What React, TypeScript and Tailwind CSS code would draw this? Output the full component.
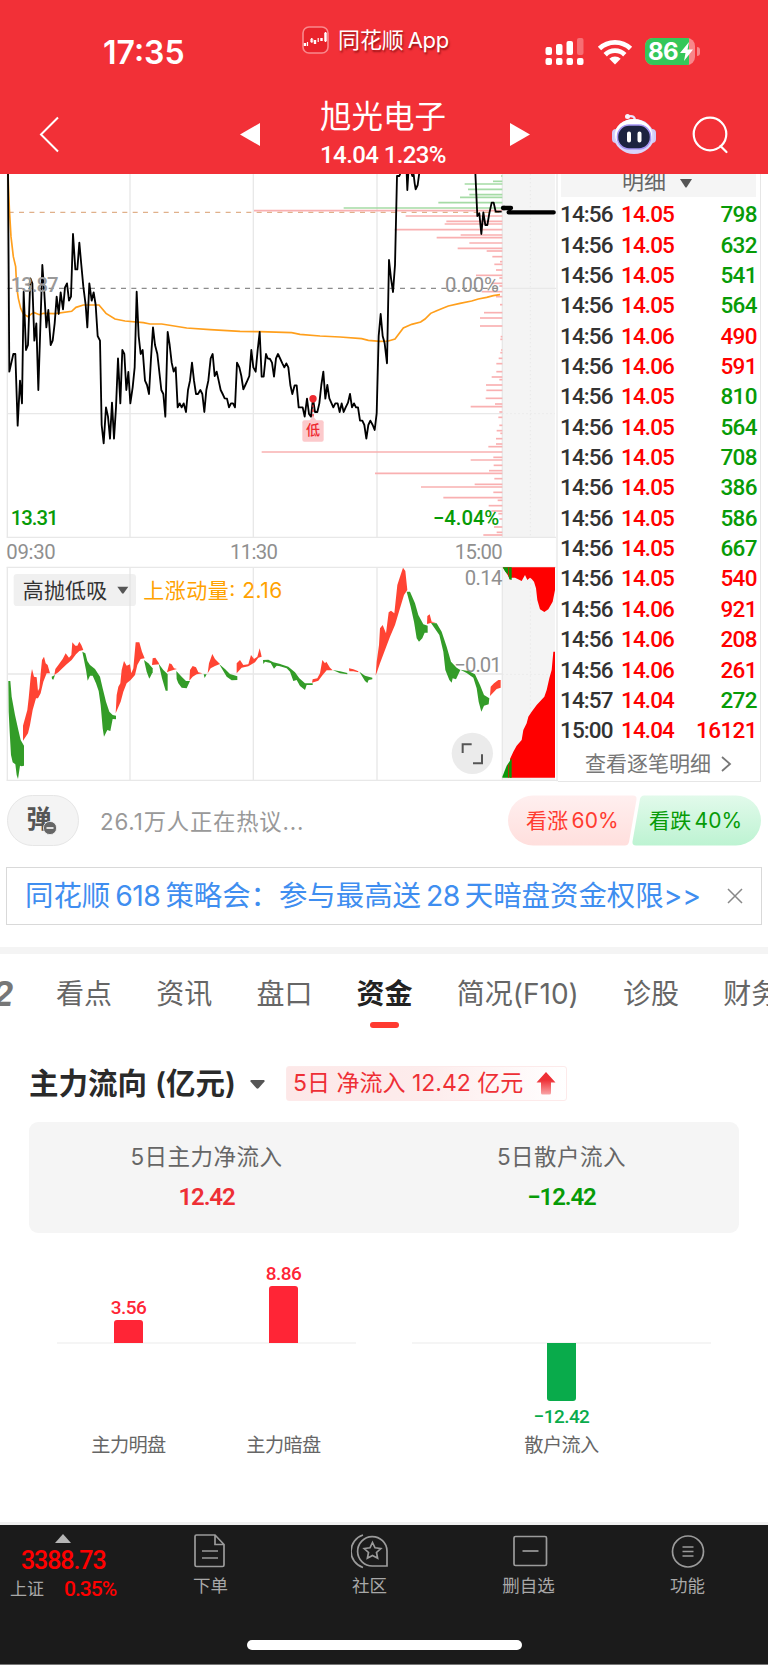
import type { ReactNode } from "react";

type Trade = { time: string; price: string; volume: string; up?: boolean };

const trades: Trade[] = [
  { time: "14:56", price: "14.05", volume: "798" },
  { time: "14:56", price: "14.05", volume: "632" },
  { time: "14:56", price: "14.05", volume: "541" },
  { time: "14:56", price: "14.05", volume: "564" },
  { time: "14:56", price: "14.06", volume: "490", up: true },
  { time: "14:56", price: "14.06", volume: "591", up: true },
  { time: "14:56", price: "14.05", volume: "810" },
  { time: "14:56", price: "14.05", volume: "564" },
  { time: "14:56", price: "14.05", volume: "708" },
  { time: "14:56", price: "14.05", volume: "386" },
  { time: "14:56", price: "14.05", volume: "586" },
  { time: "14:56", price: "14.05", volume: "667" },
  { time: "14:56", price: "14.05", volume: "540", up: true },
  { time: "14:56", price: "14.06", volume: "921", up: true },
  { time: "14:56", price: "14.06", volume: "208", up: true },
  { time: "14:56", price: "14.06", volume: "261", up: true },
  { time: "14:57", price: "14.04", volume: "272" },
  { time: "15:00", price: "14.04", volume: "16121", up: true },
];

// chart data is in 1/3 px units
const priceLines = [
  "24,12 28,605 40,552 46,552 53,767 60,632 66,700 71,365 78,540 84,525 91,325 97,340 103,512 109,460 115,660 127,285 133,370 139,472 145,420 152,525 158,512 164,460 170,380 176,432 182,367 189,418 195,352 201,340 207,392 213,380 219,192 226,298 232,298 238,218 244,285 250,350 257,405 262,472 268,340 275,392 281,367 287,405 293,498 300,512 305,765 311,820 318,712 324,740 330,806 336,698 342,806 348,712 354,565 361,700 367,540 373,552 379,660 385,606 391,700 398,652 404,592 410,365 416,498 422,552 428,540 435,632 441,645 447,672 453,565 459,472 465,525 472,552 478,606 484,660 490,672 496,740 503,486 509,525 515,578 521,605 527,592 533,712 539,700 545,712 551,700 558,726 564,660 570,632 576,578 582,632 588,672 594,672 601,660 607,672 613,726 619,660 625,632 632,565 638,552 644,618 650,605 656,632 662,660 668,672 674,685 681,686 687,712 693,700 699,700 705,712 711,578 718,592 724,618 730,658 736,645 742,632 748,618 754,540 760,592 767,605 773,540 779,486 785,620 791,620 798,552 803,565 810,567 816,578 822,620 828,565 834,552 841,567 847,580 853,592 859,580 865,592 871,645 877,672 884,646 890,646 896,712 908,712 914,740 921,686 927,732 933,740 939,686 945,726 952,726 958,700 964,645 970,605 976,686 982,645 988,685 1000,712 1006,700 1013,700 1019,726 1025,700 1031,726 1037,712 1044,698 1050,672 1056,712 1062,700 1068,712 1074,712 1080,752 1087,752 1093,765 1099,806 1105,765 1111,752 1118,765 1124,780 1130,730 1136,498 1142,432 1148,498 1154,520 1161,580 1167,270 1173,325 1179,366 1185,285 1191,18 1198,18 1202,8",
  "1220,8 1222,60 1225,8",
  "1234,8 1237,18 1241,14 1244,40 1247,58 1253,45 1258,8",
  "1426,8 1432,138 1438,130 1444,192 1450,127 1456,165 1462,165 1468,130 1475,98 1481,98 1487,125 1505,125",
];

const averageLine =
  "24,12 28,115 33,200 40,260 47,290 50,350 55,385 62,415 70,432 84,440 95,431 103,428 118,434 130,430 165,431 215,424 228,412 250,405 297,405 318,430 345,447 375,453 430,458 450,462 485,462 560,474 630,479 720,484 779,485 875,488 900,493 960,498 1020,501 1085,506 1105,511 1140,514 1165,513 1185,507 1210,474 1235,463 1262,456 1275,447 1292,430 1310,422 1330,414 1345,408 1380,400 1415,393 1435,387 1460,382 1480,377 1500,374";

// [y, left edge]
const sellVolume = [
  [18, 783], [34, 759], [42, 674], [58, 684], [74, 688], [82, 660], [98, 595], [114, 311],
];
const buyVolume = [
  [122, 42], [138, 497], [154, 619], [162, 614], [179, 464], [195, 662], [203, 590], [219, 688],
  [235, 653], [243, 740], [260, 757], [275, 780], [283, 763], [300, 768], [316, 708], [324, 778],
  [340, 755], [348, 778], [365, 725], [380, 768], [404, 780], [428, 732], [444, 720], [468, 720],
  [500, 782], [508, 781], [540, 783], [548, 781], [565, 776], [581, 769], [605, 769], [621, 755],
  [629, 778], [645, 738], [661, 739], [685, 737], [702, 765], [710, 692], [726, 778], [742, 775],
  [766, 778], [782, 770], [790, 781], [806, 768], [822, 768], [830, 745], [846, 65], [862, 760],
  [870, 692], [886, 761], [902, 747], [910, 405], [926, 763], [943, 704], [951, 543], [967, 760],
  [983, 610], [991, 773], [1007, 746], [1023, 754], [1031, 775], [1047, 778], [1071, 762],
  [1087, 770], [1095, 730],
];

const momentumUpLeft = [
  "69,557 69,512 82,465 86,430 92,365 96,342 102,365 110,367 114,408 118,400 122,355 126,315 132,305 137,325 143,330 150,355 140,355 130,380 122,415 114,430 108,430 98,465 90,510 84,535 75,548",
  "163,360 166,342 175,330 188,312 197,295 207,308 214,300 217,262 226,272 232,272 238,260 244,270 250,285 238,288 228,298 215,315 200,328 185,342 175,352",
  "347,475 350,420 355,395 361,385 365,345 372,318 380,332 390,328 394,355 400,340 407,262 418,262 426,290 434,310 422,312 412,330 405,360 392,375 380,385 370,410 362,440",
  "456,330 458,310 466,308 475,322 478,328",
  "501,352 508,325 515,328 522,340 531,342 520,345 508,349",
  "568,377 570,345 578,333 588,337 595,352 607,355 590,358 578,365",
  "623,355 627,325 637,297 645,312 660,327 645,333 632,340",
  "710,355 710,325 720,315 730,330 745,328 753,300 762,312 772,305 779,280 785,305 775,308 765,322 745,334 725,338",
];
const momentumDownLeft = [
  "25,378 31,378 35,425 45,480 55,525 62,555 72,572 72,632 65,634 60,632 54,672 50,660 46,628 38,622 33,600 29,530 26,470",
  "155,365 165,360 160,374 156,372",
  "247,290 256,295 262,318 270,330 285,342 300,365 308,400 318,440 328,470 338,480 348,482 348,493 338,492 331,528 322,525 312,545 308,520 302,450 296,408 288,385 278,362 270,362 263,377 258,345 252,315",
  "432,315 445,325 458,340 458,352 448,371 440,350",
  "476,326 490,345 503,358 503,407 497,407 486,370",
  "529,348 545,365 558,378 570,378 560,400 545,398 535,385 530,372",
  "611,358 620,358 614,369",
  "658,328 675,342 690,357 712,364 712,375 695,376 680,365",
  "789,315 805,314 820,322 841,327 841,334 830,332 822,341 812,324 795,320 790,327",
];
const momentumUpRight = [
  "96,383 98,373 112,370 120,355 127,315 135,325 139,320 150,338 158,346 140,346 128,360 115,377",
  "207,340 220,343 235,349 235,352 220,349 208,349",
  "287,362 290,320 297,270 300,220 308,210 318,235 326,172 333,167 343,175 352,90 360,65 369,38 376,48 382,105 372,120 360,160 345,210 330,245 315,285 300,325",
  "441,207 442,183 449,178 455,200 468,202 452,204",
  "630,423 632,395 642,385 655,375 662,375 662,398 650,402",
];
const momentumDownRight = [
  "0,327 25,335 45,352 58,370 75,385 98,385 98,390 80,390 75,405 60,393 50,375 40,378 30,350 20,340 0,334",
  "158,345 180,349 202,354 202,358 180,355",
  "238,350 255,362 277,368 277,373 266,375 262,384 255,378",
  "380,110 390,110 405,145 415,180 430,208 443,212 443,233 434,233 427,250 417,260 410,250 402,200 392,155",
  "453,204 470,205 485,230 500,275 513,320 530,338 541,345 528,373 518,370 515,383 508,375 496,345 490,290 478,240",
  "541,344 565,348 585,358 600,390 612,420 628,430 626,448 612,452 604,470 596,440 590,400 580,368 560,354",
];

const tabs = ["看点", "资讯", "盘口", "资金", "简况(F10)", "诊股", "财务"];

function Polygons({ items, fill }: { items: string[]; fill: string }) {
  return (
    <g fill={fill}>
      {items.map((points) => (
        <polygon key={points} points={points} />
      ))}
    </g>
  );
}

function ChartText({
  x,
  y,
  w,
  fill,
  size = 61,
  weight = 400,
  children,
}: {
  x: number;
  y: number;
  w: number;
  fill: string;
  size?: number;
  weight?: number;
  children: string;
}) {
  return (
    <text
      x={x}
      y={y}
      textLength={w}
      fill={fill}
      fontSize={size}
      fontWeight={weight}
      className="font-[Roboto,'Noto_Sans_CJK_SC',sans-serif]"
    >
      {children}
    </text>
  );
}

function Header() {
  return (
    <header className="h-[174px] bg-[#f23037] text-white">
      <div className="flex h-[88px] items-start">
        <div className="w-[302px] pt-[33px] pl-[103px] text-[32px] leading-[40px] font-semibold">
          17:35
        </div>
        <div className="flex w-[243px] items-center pt-[25px]">
          <svg width="27" height="28" viewBox="0 0 27 28" fill="none">
            <rect x="1" y="1" width="25" height="26" rx="6" fill="#e9232b" stroke="#f9898d" strokeWidth="1.6" />
            <g stroke="#fff">
              <path d="M3 17v3M13 14v4M19.5 12v3" strokeWidth="2.4" />
              <path d="M5.5 16v4M9.7 12v4.500M16.2 12v4M23.500 6v10" strokeWidth="1.2" />
              <path d="M22.600 7h2v8h-2zM8.800 13h2v3h-2z" strokeWidth="0.8" />
            </g>
          </svg>
          <span className="ml-[9px] text-[22px] leading-[30px] tracking-[-0.1px] whitespace-nowrap [text-shadow:1px_2px_2px_rgba(90,0,0,0.6)]">
            同花顺<span className="ml-[4px] tracking-[-0.3px]">App</span>
          </span>
        </div>
        <div className="flex items-center pt-[37px]">
          <svg width="40" height="29" viewBox="0 0 40 29" fill="#fff">
            <rect x="0.500" y="10" width="6.500" height="8" rx="2" />
            <rect x="11" y="7" width="6.500" height="11" rx="2" />
            <rect x="21.500" y="4" width="6.500" height="14" rx="2" />
            <rect x="32" y="1" width="6.500" height="17" rx="2" opacity=".3" />
            <rect x="0.500" y="21" width="6.500" height="7" rx="2" />
            <rect x="11" y="21" width="6.500" height="7" rx="2" />
            <rect x="21.500" y="21" width="6.500" height="7" rx="2" />
            <rect x="32" y="21" width="6.500" height="7" rx="2" />
          </svg>
          <svg className="ml-3" width="36" height="26" viewBox="0 0 36 26" fill="none" stroke="#fff" strokeWidth="4.800">
            <path d="M2.500 9.500a22.500 22.500 0 0 1 31 0" />
            <path d="M8.200 15.700a14 14 0 0 1 19.600 0" />
            <path d="M18 25.500l-5.700-5.800a8.200 8.200 0 0 1 11.400 0z" fill="#fff" stroke="none" />
          </svg>
          <div className="relative ml-3 h-[27px] w-[50px] overflow-hidden rounded-[8px] bg-[#f8868a]">
            <div className="h-full w-[44px] bg-[#34c759]" />
            <span className="absolute top-0 left-[3px] text-[24px] leading-[27px] font-bold tracking-[-0.5px]">86</span>
            <svg className="absolute top-[4px] left-[35px]" width="13" height="19" viewBox="0 0 13 19" fill="#fff">
              <path d="M9 0L0 11h5.500L4 19l9-11.500H7.500z" />
            </svg>
          </div>
          <div className="ml-[2px] h-[9px] w-[3px] rounded-r-full bg-[#f8868a]" />
        </div>
      </div>

      <div className="flex h-[86px]">
        <svg className="mt-[28px] ml-[39px]" width="20" height="37" viewBox="0 0 20 37" fill="none" stroke="#fff" strokeWidth="2">
          <path d="M19 1.500L2 18.500l17 17" />
        </svg>
        <svg className="mt-[35px] ml-[181px]" width="20" height="23" viewBox="0 0 20 23" fill="#fff">
          <path d="M20 0v23L0 11.500z" />
        </svg>
        <div className="w-[250px] pr-[4px] text-center">
          <div className="mt-[9px] text-[31.500px] leading-[40px]">旭光电子</div>
          <div className="mt-[4px] font-[Roboto] text-[24px] leading-[28px] font-medium tracking-[-0.600px]">14.04 1.23%</div>
        </div>
        <svg className="mt-[35px]" width="20" height="23" viewBox="0 0 20 23" fill="#fff">
          <path d="M0 0v23L20 11.500z" />
        </svg>
        <svg className="mt-[25px] ml-[81px]" width="46" height="42" viewBox="0 0 46 42" fill="none">
          <path d="M17 3.500c5-1 7 0 7 5" stroke="#e9e5ff" strokeWidth="2.200" />
          <circle cx="16.500" cy="3.500" r="2.500" fill="#f7f4ff" />
          <rect x="1" y="16" width="8" height="14" rx="4" fill="#cfcaf8" />
          <rect x="37" y="16" width="8" height="14" rx="4" fill="#cfcaf8" />
          <ellipse cx="23" cy="23.500" rx="20" ry="17.500" fill="#d9d5fb" />
          <ellipse cx="22.500" cy="21.500" rx="18.500" ry="15.500" fill="#fff" />
          <rect x="6.500" y="12" width="33" height="24" rx="11.500" fill="#1d2340" stroke="#a796f4" strokeWidth="1.500" />
          <path d="M18 20.500v7M28.500 20.500v7" stroke="#fff" strokeWidth="4" strokeLinecap="round" />
        </svg>
        <svg className="mt-[28px] ml-[35px]" width="38" height="38" viewBox="0 0 38 38" fill="none" stroke="#fff" strokeWidth="2.200">
          <circle cx="18" cy="18" r="16.300" />
          <path d="M28.500 30l6 6" strokeLinecap="round" />
        </svg>
      </div>
    </header>
  );
}

function Charts() {
  return (
    <svg className="block h-[608px] w-[558px] shrink-0" viewBox="0 12 1674 1824" fill="none">
      <rect x="1507" y="0" width="158" height="1102" fill="#f4f4f4" />
      <rect x="1507" y="1192" width="158" height="638" fill="#f4f4f4" />
      <g stroke="#e8e8e8" strokeWidth="4">
        <path d="M22 0V1102M22 1192V1832M390 0V1102M390 1192V1832M760 0V1102M760 1192V1832M1131 0V1102M1131 1192V1832M1507 0V1102M1507 1192V1832M1671 0V1834" />
        <path d="M22 731H1507M20 1102H1668M20 1192H1668M22 1512H1507M20 1831H1674M1507 355H1668" />
        <path d="M1591 0V1102M1591 1192V1832M1507 731H1665M1507 1513H1665" strokeDasharray="4 8" strokeWidth="3" />
      </g>
      <path d="M26 127H1507" stroke="#e0b08a" strokeWidth="3.500" strokeDasharray="15 16" />
      <path d="M22 355H1507" stroke="#8c8c8c" strokeWidth="3.500" strokeDasharray="15 16" />
      <g stroke="#a5dba5" strokeWidth="5">
        {sellVolume.map(([y, x]) => (
          <path key={y} d={`M${x + 720} ${y}H1507`} />
        ))}
      </g>
      <g stroke="#f9b0b1" strokeWidth="5">
        {buyVolume.map(([y, x]) => (
          <path key={y} d={`M${x + 720} ${y}H1507`} />
        ))}
      </g>
      <polyline points={averageLine} stroke="#ff9f1c" strokeWidth="5" />
      <g stroke="#000" strokeWidth="5.500" strokeLinejoin="round">
        {priceLines.map((points) => (
          <polyline key={points} points={points} />
        ))}
      </g>
      <g stroke="#000" strokeWidth="13" strokeLinecap="round">
        <path d="M1509 114H1533M1526 127H1661" />
        <path d="M1507 114H1515" strokeLinecap="butt" />
      </g>

      <path d="M939 690V750" stroke="#e8262d" strokeWidth="4" strokeDasharray="8 6" />
      <circle cx="939" cy="686" r="11" fill="#ee2a30" />
      <path d="M928 752l11-14 11 14z" fill="#fcc9cb" />
      <rect x="907" y="751" width="64" height="64" rx="6" fill="#fcc9cb" />
      <ChartText x={918} y={796} w={42} size={42} weight={500} fill="#ee2a30">低</ChartText>

      <ChartText x={32} y={365} w={144} weight={500} fill="#999999">13.87</ChartText>
      <ChartText x={1335} y={365} w={162} fill="#8f8f8f">0.00%</ChartText>
      <ChartText x={32} y={1064} w={144} weight={500} fill="#079b07">13.31</ChartText>
      <ChartText x={1299} y={1064} w={199} weight={500} fill="#079b07">−4.04%</ChartText>
      <ChartText x={19} y={1166} w={148} fill="#8f8f8f">09:30</ChartText>
      <ChartText x={690} y={1166} w={144} fill="#8f8f8f">11:30</ChartText>
      <ChartText x={1364} y={1166} w={144} fill="#8f8f8f">15:00</ChartText>

      <g transform="translate(0 1155)">
        <rect x="41" y="57" width="367" height="96" rx="10" fill="#f0f0f0" />
        <path d="M390 57V153" stroke="#e4e4e4" strokeWidth="4" />
        <ChartText x={68} y={130} w={254} size={63} fill="#333333">高抛低吸</ChartText>
        <path d="M352 95h33l-14 20q-2 2-5 0z" fill="#555" />
        <text
          x="430"
          y="129"
          textLength="417"
          fontSize="63"
          fill="#ffa200"
          className="font-[Inter,'Noto_Sans_CJK_SC',sans-serif]"
        >
          上涨动量: 2.16
        </text>
        <Polygons items={momentumUpLeft} fill="#ff4433" />
        <Polygons items={momentumDownLeft} fill="#339c28" />
      </g>
      <g transform="translate(840 1155)">
        <ChartText x={554} y={90} w={113} fill="#8f8f8f">0.14</ChartText>
        <ChartText x={523} y={352} w={142} fill="#8f8f8f">−0.01</ChartText>
        <Polygons items={momentumUpRight} fill="#ff4433" />
        <Polygons items={momentumDownRight} fill="#339c28" />
        <path
          d="M668 37H825V105L818 140 805 163 793 171 780 163 772 135 768 100 762 80 755 72 750 68 742 75 735 60 725 78 705 68 695 68 690 75 683 60z"
          fill="#f00"
        />
        <path d="M668 37H695V75L688 72 685 60 676 50z" fill="#0a980a" />
        <path
          d="M690 668H825V290H820L815 345 808 370 800 405 793 425 770 450 755 470 745 485 740 505 730 525 725 555 710 572 700 590 690 612z"
          fill="#f00"
        />
        <path d="M667 665L680 632 695 610V668H667z" fill="#0a980a" />
        <path d="M686 628V668M686 37V62" stroke="#f00" strokeWidth="2.500" />
        <circle cx="577" cy="595" r="62" fill="#ebebeb" />
        <path d="M548 594V568H575M606 598V625H579" stroke="#555" strokeWidth="6" />
      </g>
    </svg>
  );
}

function TradeList() {
  return (
    <div className="flex h-[607.500px] w-[203px] flex-col border-r border-b border-[#e6e6e6]">
      <div className="ml-[3px] h-[23px] w-[195px] overflow-hidden bg-[#f5f5f5]">
        <div className="-mt-[9px] flex items-center pl-[61px] text-[22px] leading-[33px] text-[#666]">
          明细
          <svg className="mt-[4px] ml-[14px]" width="12" height="9" viewBox="0 0 12 9" fill="#555">
            <path d="M0 0h12L6.500 8.500h-1z" />
          </svg>
        </div>
      </div>
      <div className="mt-[2px] font-[Roboto] text-[22.500px] font-medium">
        {trades.map((t, i) => (
          <div key={i} className="flex h-[30.370px] items-center pr-[3px] pl-[2px] leading-[30px]">
            <span className="w-[61px] tracking-[-0.900px] text-[#333]">{t.time}</span>
            <span className="tracking-[-0.900px] text-[#f00]">{t.price}</span>
            <span className={t.up ? "ml-auto tracking-[-0.600px] text-[#f00]" : "ml-auto tracking-[-0.600px] text-[#079b07]"}>
              {t.volume}
            </span>
          </div>
        ))}
      </div>
      <div className="flex flex-1 items-center pt-[2px] pl-[27px] text-[21px] text-[#777]">
        查看逐笔明细
        <svg className="ml-[10px]" width="11" height="16" viewBox="0 0 11 16" fill="none" stroke="#777" strokeWidth="1.800">
          <path d="M1 1l8 7-8 7" />
        </svg>
      </div>
    </div>
  );
}

function Discussion() {
  return (
    <div className="flex h-[85px] pt-[13px] pl-[7px]">
      <div className="relative flex h-[51px] w-[72px] items-center justify-center rounded-full border border-[#e6e6e6] bg-[#f4f4f4]">
        <span className="mt-[-4px] -ml-[8px] text-[25px] leading-[30px] font-bold text-[#555]">弹</span>
        <svg className="absolute top-[25px] left-[35px]" width="14" height="14" viewBox="0 0 14 14">
          <circle cx="7" cy="7" r="6.600" fill="#666" stroke="#f4f4f4" strokeWidth=".8" />
          <path d="M3.500 7h7" stroke="#fff" strokeWidth="1.600" />
        </svg>
      </div>
      <div className="ml-[21px] w-[408px] text-[22.300px] leading-[53px] tracking-[0.850px] text-[#999]">26.1万人正在热议...</div>
      <div className="relative h-[51px] w-[253px]">
        <svg className="absolute inset-0" width="253" height="51" viewBox="0 0 253 51">
          <defs>
            <linearGradient id="bull" x1="0" y1="0" x2="0" y2="1">
              <stop stopColor="#ffefef" />
              <stop offset="1" stopColor="#ffdfdd" />
            </linearGradient>
            <linearGradient id="bear" x1="0" y1="0" x2="0" y2="1">
              <stop stopColor="#e2faeb" />
              <stop offset="1" stopColor="#bdf3d2" />
            </linearGradient>
          </defs>
          <path d="M25 0.500H125q4 0 3.500 4L121 47q-1 3.500-4 3.500H25a25 25 0 0 1 0-50z" fill="url(#bull)" />
          <path d="M136 0.500H228a25 25 0 0 1 0 50H128q-4 0-3.500-4L132 4q1-3.500 4-3.500z" fill="url(#bear)" />
        </svg>
        <div className="relative flex text-[21px] leading-[52px] tracking-[0.200px]">
          <span className="w-[124px] pl-[18px] text-[#ff3b30]">看涨<span className="ml-[3px]">60%</span></span>
          <span className="pl-[17px] text-[#079b07]">看跌<span className="ml-[3px]">40%</span></span>
        </div>
      </div>
    </div>
  );
}

function Banner() {
  return (
    <div className="mx-[6px] flex h-[58px] items-center justify-between border border-[#d9d9d9] pr-[18px] pl-[18px]">
      <span className="text-[28.400px] whitespace-nowrap text-[#3f8ef0]">
        同花顺<span className="mx-[5px] tracking-[-0.500px]">618</span>策略会：参与最高送
        <span className="mx-[5px] tracking-[-0.500px]">28</span>天暗盘资金权限&gt;&gt;
      </span>
      <svg width="16" height="16" viewBox="0 0 16 16" stroke="#888" strokeWidth="1.500">
        <path d="M1 1l14 14M15 1L1 15" />
      </svg>
    </div>
  );
}

function Tabs() {
  return (
    <nav className="flex h-[84px] overflow-hidden pt-[20px] text-[28px] leading-[40px] whitespace-nowrap text-[#666]">
      <span className="-ml-[8px] w-[64px] shrink-0 text-[34px] font-bold text-[#777] italic">2</span>
      {tabs.map((tab) => (
        <div key={tab} className="mr-[44.200px] shrink-0">
          {tab === "资金" ? (
            <div className="font-bold text-[#222]">
              资金
              <div className="mx-auto mt-[8px] h-[6px] w-[29px] rounded-full bg-[#ff3a30]" />
            </div>
          ) : (
            tab
          )}
        </div>
      ))}
    </nav>
  );
}

function FlowCard({ label, value, color }: { label: string; value: string; color: string }) {
  return (
    <div className="w-1/2 text-center">
      <div className="mt-[19px] text-[22.500px] leading-[32px] tracking-[0.500px] text-[#666]">{label}</div>
      <div className={`mt-[9px] font-[Roboto] text-[24px] leading-[30px] font-semibold tracking-[-1.100px] ${color}`}>{value}</div>
    </div>
  );
}

function BarLabel({ children }: { children: string }) {
  return <div className="absolute top-[88px] left-1/2 -translate-x-1/2 text-[19.200px] leading-[28px] font-normal whitespace-nowrap text-[#666]">{children}</div>;
}

function FundFlow() {
  return (
    <section className="h-[484px] px-[29px]">
      <div className="flex h-[84px] items-center pt-[6px]">
        <h2 className="text-[29.500px] leading-[40px] font-semibold whitespace-nowrap text-[#2a2a2a]">
          主力流向<span className="ml-[8px]">(亿元)</span>
        </h2>
        <svg className="mt-[2px] ml-[14px]" width="15" height="9" viewBox="0 0 15 9" fill="#555">
          <path d="M1 0h13q1 .5.500 1.500L8.500 8.300q-1 .7-2 0L.5 1.500Q0 .5 1 0z" />
        </svg>
        <div className="ml-[21px] flex h-[35px] w-[281px] items-center rounded-[3px] border border-[#fdeaea] bg-linear-to-r from-[#fde8e8] via-[#fdecec] to-white pl-[6px] text-[23px] leading-[33px] whitespace-nowrap text-[#ee2f35]">
          5日 净流入 12.42 亿元
          <svg className="ml-auto mr-[10px]" width="20" height="23" viewBox="0 0 20 23">
            <defs>
              <linearGradient id="arrow" x1="0" y1="0" x2="0" y2="1">
                <stop offset=".35" stopColor="#ee2f35" />
                <stop offset="1" stopColor="#f9a5a7" />
              </linearGradient>
            </defs>
            <path d="M10 0l9.500 10.500H15V21q0 1.500-1.500 1.500h-7Q5 22.500 5 21V10.500H.5z" fill="url(#arrow)" />
          </svg>
        </div>
      </div>
      <div className="flex h-[111px] rounded-[9px] bg-[#f5f5f5]">
        <FlowCard label="5日主力净流入" value="12.42" color="text-[#ee2f35]" />
        <FlowCard label="5日散户流入" value="−12.42" color="text-[#079b07]" />
      </div>

      <div className="mt-[109px] flex justify-between px-[28px] font-[Roboto,'Noto_Sans_CJK_SC',sans-serif] text-[19px] leading-[28px] font-medium tracking-[-0.600px]">
        <div className="relative flex w-[299px] border-t-2 border-[#f5f5f5]">
          <div className="relative ml-[57px] h-[120px] w-[29px]">
            <div className="absolute bottom-[121px] h-[23px] w-full rounded-t-[3px] bg-[#ff2536]" />
            <div className="absolute bottom-[142px] left-1/2 -translate-x-1/2 text-[#ff2536]">3.56</div>
            <BarLabel>主力明盘</BarLabel>
          </div>
          <div className="relative ml-[126px] h-[120px] w-[29px]">
            <div className="absolute bottom-[121px] h-[57px] w-full rounded-t-[3px] bg-[#ff2536]" />
            <div className="absolute bottom-[176px] left-1/2 -translate-x-1/2 text-[#ff2536]">8.86</div>
            <BarLabel>主力暗盘</BarLabel>
          </div>
        </div>
        <div className="flex w-[299px] justify-center border-t-2 border-[#f5f5f5]">
          <div className="relative h-[120px] w-[29px]">
            <div className="-mt-px h-[58px] w-full rounded-b-[3px] bg-[#09ab4b]" />
            <div className="absolute top-[59px] left-1/2 -translate-x-1/2 text-[#09ab4b]">−12.42</div>
            <BarLabel>散户流入</BarLabel>
          </div>
        </div>
      </div>
    </section>
  );
}

function NavItem({ label, children }: { label: string; children: ReactNode }) {
  return (
    <div className="flex w-[159px] flex-col items-center pt-[8px]">
      <svg width="38" height="36" viewBox="0 0 38 36" fill="none" stroke="#9b9b9b" strokeWidth="1.700">
        {children}
      </svg>
      <span className="mt-[3px] text-[17.500px] leading-[28px] text-[#a8a8a8]">{label}</span>
    </div>
  );
}

function BottomBar() {
  return (
    <footer className="flex h-[143px] flex-col border-t-[3px] border-b border-t-[#f0f0f0] border-b-[#777] bg-[#1b1b1b]">
      <div className="flex h-[115px]">
        <div className="w-[131px]">
          <svg className="mt-[9px] ml-[55px]" width="16" height="9" viewBox="0 0 16 9" fill="#b5b5b5">
            <path d="M8 0l8 9H0z" />
          </svg>
          <div className="mt-[3px] ml-[21px] font-[Roboto] text-[25px] leading-[30px] font-medium tracking-[-1.100px] text-[#f00]">
            3388.73
          </div>
          <div className="flex items-center pt-px pl-[10px]">
            <span className="w-[54px] text-[17px] leading-[24px] text-[#a8a8a8]">上证</span>
            <span className="font-[Roboto] text-[21px] leading-[24px] font-medium tracking-[-1px] text-[#f00]">0.35%</span>
          </div>
        </div>
        <NavItem label="下单">
          <path d="M3 3.500q0-1.500 1.500-1.500H23l9 9.500V32q0 1.500-1.500 1.500h-26Q3 33.500 3 32zM23 2v9.500h9M10 18h16M10 25h16" />
        </NavItem>
        <NavItem label="社区">
          <path d="M12 2A17 17 0 0 0 12 34.500" />
          <path d="M36 33H21.500A14.700 14.700 0 1 1 36 18z" />
          <path d="M21.500 9.500l2.500 5.300 5.800.7-4.300 4 1.100 5.700-5.100-2.800-5.100 2.800 1.100-5.700-4.300-4 5.800-.7z" />
        </NavItem>
        <NavItem label="删自选">
          <rect x="4" y="3.500" width="32.500" height="29" rx="1.500" />
          <path d="M12.500 18h16" />
        </NavItem>
        <NavItem label="功能">
          <circle cx="19" cy="18.500" r="15.500" />
          <path d="M13.500 14h11M13.500 18.500h11M13.500 23h11" />
        </NavItem>
      </div>
      <div className="mx-auto h-[10px] w-[275px] rounded-full bg-white" />
    </footer>
  );
}

export default function App() {
  return (
    <div className="h-[1665px] w-[768px] overflow-hidden bg-white font-[Inter,'Noto_Sans_CJK_SC',sans-serif]">
      <Header />
      <main>
        <div className="flex h-[608px]">
          <Charts />
          <TradeList />
        </div>
        <Discussion />
        <Banner />
        <div className="mt-[22px] h-[7px] bg-[#f4f4f4]" />
        <Tabs />
        <FundFlow />
      </main>
      <BottomBar />
    </div>
  );
}
